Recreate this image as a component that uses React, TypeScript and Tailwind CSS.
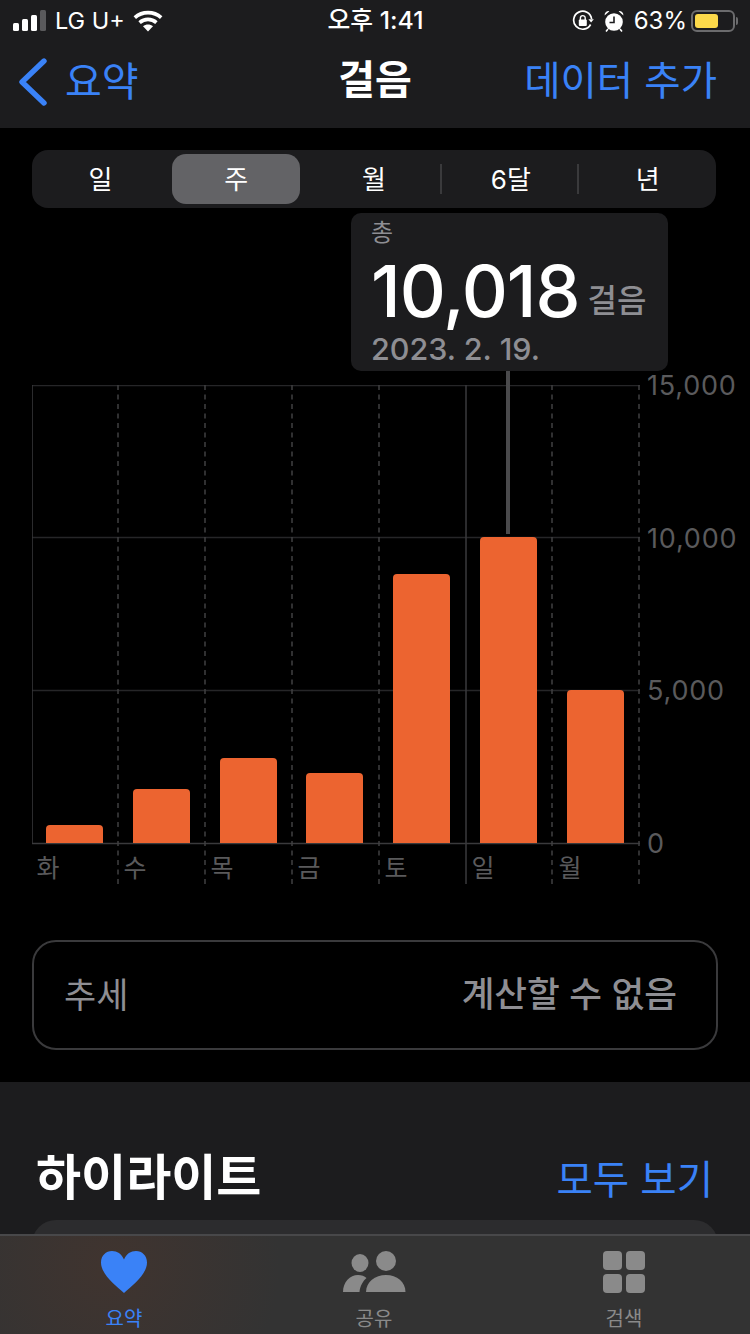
const FONT = "font-['Inter','Noto_Sans_CJK_KR',sans-serif]"

const segments = ["일", "주", "월", "6달", "년"]
const yLabels = ["15,000", "10,000", "5,000", "0"]

// heights are px above the baseline, read off the picture
const days = [
  { label: "화", height: 18 },
  { label: "수", height: 54 },
  { label: "목", height: 85 },
  { label: "금", height: 70 },
  { label: "토", height: 269 },
  { label: "일", height: 306 },
  { label: "월", height: 153 },
]

function SignalIcon() {
  return (
    <svg width="34" height="22" viewBox="0 0 34 22">
      <rect x="0" y="13" width="6" height="8" rx="1.5" fill="#fff" />
      <rect x="9" y="9" width="6" height="12" rx="1.5" fill="#fff" />
      <rect x="18" y="5" width="6" height="16" rx="1.5" fill="#fff" />
      <rect x="27" y="0" width="6" height="21" rx="1.5" fill="#5a5a5c" />
    </svg>
  )
}

function WifiIcon() {
  return (
    <svg width="30" height="22" viewBox="0 0 30 22" fill="none" stroke="#fff" strokeWidth="3.6">
      <path d="M1.800 7.600C9.200 .9 20.800 .9 28.200 7.600" />
      <path d="M6.600 12.600C11.400 8.300 18.600 8.300 23.400 12.600" />
      <path d="M15 21.500l-5-5.200c2.900-2.300 7.100-2.300 10 0z" fill="#fff" stroke="none" />
    </svg>
  )
}

function LockRotateIcon() {
  return (
    <svg width="22" height="22" viewBox="0 0 22 22" fill="none">
      <path d="M18.600 14.500A9 9 0 1 1 19.600 9" stroke="#fff" strokeWidth="1.700" />
      <path d="M16.400 9.200h5.400l-2.700 3.400z" fill="#fff" />
      <rect x="6.800" y="9.600" width="8" height="6.400" rx="1" fill="#fff" />
      <path d="M8.400 10V8a2.400 2.400 0 0 1 4.800 0v2" stroke="#fff" strokeWidth="1.400" />
    </svg>
  )
}

function AlarmIcon() {
  return (
    <svg width="20" height="22" viewBox="0 0 20 22" fill="none">
      <circle cx="10" cy="12" r="8.800" fill="#fff" />
      <path d="M10 6.500V12.500H5.500" stroke="#1c1c1e" strokeWidth="1.600" />
      <path d="M.6 5.400A4 4 0 0 1 5.400 1.200zM19.400 5.400A4 4 0 0 0 14.600 1.200z" fill="#fff" />
      <path d="M4 19l-2 2.400M16 19l2 2.400" stroke="#fff" strokeWidth="1.600" />
    </svg>
  )
}

function BatteryIcon() {
  return (
    <div className="flex items-center gap-[1px]">
      <div className="w-[44px] h-[22px] rounded-[6px] border-2 border-[#6b6b6d] p-[2px]">
        <div className="w-[23px] h-full rounded-[3px] bg-[#fcd94a]" />
      </div>
      <div className="w-[2px] h-[8px] rounded-r-sm bg-[#6b6b6d]" />
    </div>
  )
}

function StatusBar() {
  return (
    <div className="h-[40px] pt-[1px] pl-[13px] pr-[12px] flex items-center justify-between text-white">
      <div className="w-[260px] flex items-center">
        <SignalIcon />
        <span className="ml-[8px] text-[23.500px] leading-none">LG U+</span>
        <span className="ml-[8px] flex"><WifiIcon /></span>
      </div>
      <span className="text-[24.800px] font-medium leading-none">오후 1:41</span>
      <div className="w-[260px] flex items-center justify-end">
        <LockRotateIcon />
        <span className="ml-[10px] flex"><AlarmIcon /></span>
        <span className="ml-[10px] text-[24px] leading-none">63%</span>
        <span className="ml-[4px] flex"><BatteryIcon /></span>
      </div>
    </div>
  )
}

function NavBar() {
  return (
    <div className="h-[88px] pb-[4px] pl-[19px] pr-[33px] flex items-center justify-between">
      <div className="w-[274px] flex items-center text-[#3a82f7]">
        <svg width="28" height="48" viewBox="0 0 28 48" fill="none" stroke="currentColor" strokeWidth="5.400" strokeLinecap="round" strokeLinejoin="round">
          <path d="M25 3L3 24l22 21" />
        </svg>
        <span className="ml-[18px] text-[40px] leading-none">요약</span>
      </div>
      <span className="mb-[4px] text-[40px] font-semibold text-white leading-none">걸음</span>
      <span className="w-[260px] text-right text-[39.500px] text-[#3a82f7] leading-none whitespace-nowrap">데이터 추가</span>
    </div>
  )
}

function SegmentedControl() {
  return (
    <div className="ml-[32px] w-[684px] h-[58px] rounded-[16px] bg-[#1c1c1e] grid grid-cols-5 text-white text-[26px]">
      {segments.map((s, i) => (
        <div key={s} className="relative flex items-center justify-center">
          <div className={i === 1 ? "-ml-[2px] w-[128px] h-[50px] rounded-[14px] bg-[#636366] flex items-center justify-center" : "flex items-center justify-center"}>{s}</div>
          {i >= 2 && i < 4 && <div className="absolute right-0 top-[14px] w-[2px] h-[30px] bg-[#3a3a3c]" />}
        </div>
      ))}
    </div>
  )
}

function GridLines() {
  const dashed = [86, 173, 260, 347, 520, 607]
  return (
    <svg className="absolute left-0 top-0" width="608" height="500" viewBox="0 0 608 500">
      {[0.5, 152.500, 305.500, 458.500].map((y) => (
        <line key={y} x1="0" x2="608" y1={y} y2={y} stroke={y === 458.500 ? "#3a3a3c" : "#262628"} strokeWidth="1.500" />
      ))}
      <line x1="0" x2="0" y1="0" y2="458" stroke="#3a3a3c" strokeWidth="1.500" />
      <line x1="434" x2="434" y1="0" y2="499" stroke="#3a3a3c" strokeWidth="1.500" />
      {dashed.map((x) => (
        <line key={x} x1={x} x2={x} y1="0" y2="499" stroke="#404042" strokeWidth="1.500" strokeDasharray="5 4.500" />
      ))}
    </svg>
  )
}

function Chart() {
  return (
    <div className="relative mt-[177px] ml-[32px] flex">
      <div className="relative w-[607px] h-[499px]">
        <GridLines />
        <div className="relative h-[458px] pl-[14px] flex items-end gap-[29.800px]">
          {days.map((d) => (
            <div key={d.label} className="w-[57px] shrink-0 rounded-t-[4px] bg-[#ec6430]" style={{ height: d.height }} />
          ))}
        </div>
        <div className="relative pl-[4.500px] mt-[8px] flex text-[25px] text-[#5a5a5c] leading-[34px]">
          {days.map((d) => (
            <span key={d.label} className="w-[87px] shrink-0">{d.label}</span>
          ))}
        </div>
      </div>
      <div className="ml-[8px] h-[490px] -mt-[15px] flex flex-col justify-between text-[27px] leading-[32px] text-[#5a5a5c] tracking-[0.800px]">
        {yLabels.map((l) => (
          <span key={l}>{l}</span>
        ))}
      </div>
      {/* selection callout */}
      <div className="absolute left-[319px] -top-[172px] w-[317px] h-[158px] rounded-[10px] bg-[#1c1c1e] pl-[20px]">
        <div className="text-[24px] text-[#8e8e93] leading-[36px] mt-[2px]">총</div>
        <div className="flex items-end mt-[8px] h-[64px]">
          <span className="text-[71.500px] font-medium text-white leading-[64px] tracking-[-1px]">10,018</span>
          <span className="ml-[8px] mb-[6px] text-[32px] font-medium text-[#8e8e93] leading-none">걸음</span>
        </div>
        <div className="text-[30.500px] font-medium text-[#8e8e93] leading-[38px] mt-[7px]">2023. 2. 19.</div>
      </div>
      <div className="absolute left-[474px] -top-[14px] w-[4px] h-[163px] bg-[#4a4a4c]" />
    </div>
  )
}

function TrendCard() {
  return (
    <div className="mx-[32px] mt-[56px] h-[110px] rounded-[24px] border-2 border-[#3a3a3c] pl-[30px] pr-[39px] flex items-center justify-between">
      <span className="text-[35px] text-[#8e8e93]">추세</span>
      <span className="text-[35.600px] font-medium text-[#8e8e93]">계산할 수 없음</span>
    </div>
  )
}

function TabItem({ label, active, children }: { label: string; active?: boolean; children: React.ReactNode }) {
  return (
    <div className="w-[250px] flex flex-col items-center">
      <div className="h-[60px] flex items-center justify-center">{children}</div>
      <span className={active ? "mt-[2px] text-[20px] leading-[30px] text-[#3a82f7]" : "mt-[2px] text-[20px] leading-[30px] text-[#8a8a8a]"}>{label}</span>
    </div>
  )
}

function TabBar() {
  return (
    <div className="absolute left-0 right-0 bottom-0 h-[100px] border-t-2 border-[#48484a] bg-[radial-gradient(circle_at_110px_30px,#40342f_0%,#333333_170px)] pt-[6px]">
      <div className="flex -ml-[1px]">
        <TabItem label="요약" active>
          <svg width="48" height="44" viewBox="0 0 48 44">
            <path d="M24 43C15 35 1 24 1 12.500 1 5.500 6 1 12 1c5.200 0 9.500 2.800 12 8.500C26.500 3.800 30.800 1 36 1c6 0 11 4.500 11 11.500C47 24 33 35 24 43z" fill="#3a82f7" />
          </svg>
        </TabItem>
        <TabItem label="공유">
          <svg width="64" height="42" viewBox="0 0 64 42" fill="#8a8a8a">
            <ellipse cx="18" cy="12" rx="8.500" ry="9" />
            <circle cx="44" cy="10" r="10" />
            <path d="M1 41c0-10 7-17 15-17 3.500 0 6.500 1 8.500 3-3.500 3-6.500 8-7 14z" />
            <path d="M24 41c0-10 9-17 20-17s19.500 7 19.500 17z" />
          </svg>
        </TabItem>
        <TabItem label="검색">
          <div className="grid grid-cols-2 gap-[4px] w-[42px]">
            {[0, 1, 2, 3].map((i) => (
              <div key={i} className="h-[19px] rounded-[4px] bg-[#8a8a8a]" />
            ))}
          </div>
        </TabItem>
      </div>
    </div>
  )
}

export default function App() {
  return (
    <div className={`${FONT} relative w-[750px] h-[1334px] overflow-hidden bg-black flex flex-col`}>
      <div className="bg-[#1c1c1e] shrink-0">
        <StatusBar />
        <NavBar />
      </div>
      <div className="h-[954px] shrink-0 pt-[22px]">
        <SegmentedControl />
        <Chart />
        <TrendCard />
      </div>
      <div className="h-[252px] shrink-0 bg-[#1c1c1e] px-[32px] pt-[64px]">
        <div className="flex items-center justify-between pl-[4px] pr-[5px]">
          <span className="text-[49px] font-bold text-white leading-[60px]">하이라이트</span>
          <span className="mt-[4px] text-[39.500px] text-[#3a82f7] leading-[60px]">모두 보기</span>
        </div>
        <div className="mt-[10px] h-[120px] rounded-[24px] bg-[#2c2c2e]" />
      </div>
      <TabBar />
    </div>
  )
}
